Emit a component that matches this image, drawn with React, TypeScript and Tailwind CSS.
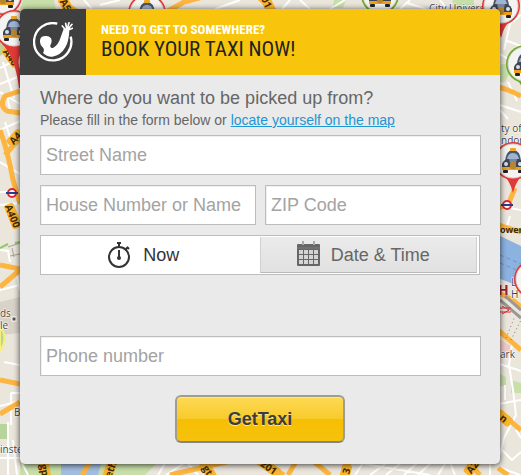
import React from "react";

type PinProps = { x: number; y: number; color: string; tip?: boolean };

function Pin({ x, y, color, tip = true }: PinProps) {
  return (
    <g transform={`translate(${x} ${y})`}>
      {tip && <path d="M-9 15 Q-3 20 0 32 Q3 20 9 15Z" fill={color} />}
      <circle r="19" fill={color} />
      <circle r="17" fill="#f4f3f1" stroke="#d9d6d2" strokeWidth="1" />
      <path d="M-8 0 Q-7 -11 0 -11 Q7 -11 8 0Z" fill="#4d5667" />
      <path d="M-6 -2 Q-5 -8 0 -8 Q5 -8 6 -2Z" fill="#9fb4d2" />
      <rect x="-3" y="-13" width="6" height="3" rx="1" fill="#f0a81c" />
      <path d="M-11 8 V3 Q-9 -2 -4 -2 H4 Q9 -2 11 3 V8Z" fill="#3f4553" />
      <path d="M-4 -2 H4 L3 2 H-3Z" fill="#7b879c" />
      <rect x="-11" y="6" width="22" height="3" fill="#eca01c" />
      <rect x="-10" y="9" width="5" height="3" rx="1" fill="#222" />
      <rect x="5" y="9" width="5" height="3" rx="1" fill="#222" />
      <rect x="-3" y="1" width="6" height="7" rx="2" fill="#b98630" />
      <circle cx="-7" cy="3" r="2" fill="#d7dfec" />
      <circle cx="7" cy="3" r="2" fill="#d7dfec" />
    </g>
  );
}

function Underground({ x, y }: { x: number; y: number }) {
  return (
    <g transform={`translate(${x} ${y})`}>
      <circle r="4" fill="#fff" stroke="#e0232e" strokeWidth="2" />
      <rect x="-6" y="-1" width="12" height="2" fill="#24408e" />
    </g>
  );
}

type RoadLabelProps = { x: number; y: number; angle: number; width: number; text: string };

function RoadLabel({ x, y, angle, width, text }: RoadLabelProps) {
  return (
    <g transform={`translate(${x} ${y}) rotate(${angle})`}>
      <rect x={-width / 2} y="-5" width={width} height="10" rx="3" fill="#fbb52f" />
      <text y="4" textAnchor="middle" fontSize="10" fontWeight="bold" fill="#3d2a08">
        {text}
      </text>
    </g>
  );
}

function CityMap() {
  const red = "#e23a38";
  const green = "#6aaa25";
  return (
    <svg
      className="absolute inset-0 h-full w-full font-['Open_Sans',sans-serif]"
      viewBox="0 0 521 475"
      preserveAspectRatio="xMinYMin slice"
      aria-hidden="true"
    >
      <rect width="521" height="475" fill="#ebe6dc" />
      <path d="M23 0H54L56 10H20Z M334 0h12l-3 8h-10z M452 0h22v5h-20z" fill="#c9dfaa" />
      <path d="M0 38 L8 50 L0 56Z M0 424h8v15H0z" fill="#b7d49a" />
      <path d="M0 302 L20 297 V333 L0 335Z" fill="#d9d2c9" />
      <path d="M0 326 Q9 338 0 351Z" fill="#b7d49a" stroke="#f6ef7c" strokeWidth="2" />
      <path d="M498 66 Q508 60 510 72 L505 82 H498Z M498 373 l8 4 v9 h-8z M511 380 l10 3 v10 h-10z" fill="#c9dfaa" />
      <path d="M498 235 L521 246 V287 L498 278Z" fill="#8cb2df" />
      <path d="M500 255 L521 264 M500 263 L521 272" stroke="#6e8fd0" strokeDasharray="4 3" />
      <path d="M498 338 L511 346 L508 356 H498Z" fill="#eecbc8" />
      <path d="M20 460H160L145 475H20Z" fill="#c9dfaa" />
      <path d="M61 460H102L98 475H61Z" fill="#a3bde0" />

      <g stroke="#fff" strokeWidth="2" fill="none">
        <path d="M0 68 L20 58 M0 84 L20 76 M3 62 L14 98 M0 92 L20 104 M7 95 L10 110 M0 130 L20 121 M5 122 L10 137 M0 162 L20 174 M0 192 H20 M0 205 L20 203 M0 250 L8 251 L10 262 M0 290 L20 285 M16 270 L20 290 M4 362 L20 365 M11 393 H20 M11 393 V425 M0 406 L20 401 M8 422 V475 M0 458 H20 M13 440 L17 475" />
        <path d="M84 0 L92 9 M100 5 L120 0 M215 9 L240 0 M290 0 L282 9 M300 0 L310 9 M345 0 L330 9 M407 3 L426 9 M410 0 L400 9 M440 0 L447 9" />
        <path d="M521 15 L510 24 L504 50 M505 40 L521 46 M498 53 L510 60 M500 105 L521 112 M508 82 L517 101 M500 110 L508 119 M498 206 L521 210 M510 216 L507 226" />
        <path d="M512 345 L509 365 L513 390 L516 415 L504 438 M500 364 L521 371 M498 404 L521 400 M505 385 V400 M516 430 L521 438 M500 448 L512 460 L521 452 M498 467 L520 475 M504 438 L500 455" />
        <path d="M22 463 L28 475 M158 475 L167 460 M166 475 L183 464 M185 460 L198 475 M355 475 L365 460 M370 475 L388 462 M386 475 L402 462 M404 475 L418 462 M418 475 L432 462 M365 464 L430 475 M438 475 L446 462 M455 475 L450 462 M490 475 V462" />
      </g>
      <g stroke="#fdb53f" strokeWidth="5" fill="none">
        <path d="M20 91 L5 96 Q-1 106 7 111 L20 113 M0 130 Q8 152 13 180 L20 204 M5 155 L20 138 M0 265 L20 269 M0 287 L20 270 M0 380 L20 384 M0 414 L20 402" />
        <path d="M59 0 L78 12 M166 12 L184 2 L203 -3 M258 -3 L276 12" />
        <path d="M498 87 Q510 90 521 96 M515 188 L508 205 L498 208 M498 225 L521 232 M498 293 Q510 297 521 307 M498 330 L521 350 M498 411 L521 430 M498 468 L508 475" />
        <path d="M82 475 L90 462 M170 475 L235 460 M260 462 L284 475 M288 475 L297 460 M312 460 L330 475 M342 475 L350 462 M466 460 L480 475" />
      </g>
      <path d="M8 247 L20 243 M10 256 L20 254 M12 248 L14 257" stroke="#a7a198" fill="none" />
      <path d="M0 248 L8 244 M15 243 L20 242" stroke="#8dca62" strokeWidth="2" />
      <path d="M500 300 L521 318 M505 296 L521 310" stroke="#9b9894" strokeWidth="3" />
      <path d="M506 338 L515 316 M511 340 L521 320" stroke="#777" strokeDasharray="1 3" />

      <RoadLabel x={11} y={57} angle={55} width={22} text="A40" />
      <RoadLabel x={66} y={5} angle={60} width={18} text="A5" />
      <RoadLabel x={267} y={2} angle={65} width={22} text="01" />
      <RoadLabel x={15} y={138} angle={-48} width={18} text="A4" />
      <RoadLabel x={13} y={216} angle={68} width={26} text="A400" />
      <RoadLabel x={45} y={470} angle={80} width={24} text="gp" />
      <RoadLabel x={110} y={469} angle={-70} width={24} text="eth" />
      <RoadLabel x={208} y={470} angle={58} width={20} text="gt" />
      <RoadLabel x={269} y={467} angle={35} width={26} text="201" />
      <RoadLabel x={346} y={471} angle={-75} width={14} text="3" />
      <RoadLabel x={472} y={467} angle={-52} width={18} text="A2" />
      <RoadLabel x={504} y={418} angle={40} width={18} text="n" />

      <g fontSize="10" fill="#444" stroke="#fff" strokeWidth="1" paintOrder="stroke">
        <text x="429" y="12">City Univers</text>
        <text x="0" y="317">ds</text>
        <text x="0" y="329">le</text>
        <text x="14" y="416">B</text>
        <text x="0" y="453">inste</text>
        <text x="501" y="132">ty of</text>
        <text x="501" y="144">ndor</text>
        <text x="511" y="286">L</text>
        <text x="511" y="298">H</text>
        <text x="500" y="358">ark</text>
      </g>
      <text x="500" y="233" fontSize="9" fontWeight="bold" fill="#3d2a08">
        ower
      </text>
      <text x="498" y="295" fontSize="14" fontWeight="bold" fill="#a51e36">
        H
      </text>
      <rect x="12" y="317" width="4" height="4" fill="#5b5146" stroke="#fff" />
      <Underground x={12} y={193} />
      <Underground x={507} y={205} />
      <path d="M500 308 H511 M500 312 H511 M502 306 L509 310 L502 314" stroke="#dc2c37" fill="none" />

      <path d="M2 44 Q15 56 19 88 H30 V44Z" fill={red} />
      <Pin x={36} y={62} color={red} tip={false} />
      <Pin x={3} y={-4} color={red} tip={false} />
      <Pin x={14} y={29} color={red} tip={false} />
      <Pin x={147} y={13} color={red} />
      <Pin x={380} y={-5} color={green} tip={false} />
      <Pin x={501} y={6} color={red} />
      <Pin x={525} y={64} color={green} />
      <Pin x={513} y={161} color={red} />
      <Pin x={533} y={279} color={red} />
    </svg>
  );
}

function Logo() {
  return (
    <svg className="h-10 w-10" viewBox="0 0 120 120" role="img" aria-label="GetTaxi">
      <path d="M73 5 A56 56 0 1 0 113 44" fill="none" stroke="#fff" strokeWidth="7" />
      <path
        d="M21 55 Q22 42 38 42 Q55 42 56 56 Q56 65 52 70 Q51 80 60 78 Q76 70 83 46 L93 18 L109 23 Q108 58 97 76 Q84 100 58 104 Q42 105 30 93 Q36 84 29 76 Q20 68 21 55Z"
        fill="#fff"
      />
      <path
        d="M98 24 L88 12 M101 20 L98 4 M103 20 L108 2 M105 22 L117 7 M105 24 L119 19"
        stroke="#fff"
        strokeWidth="5"
        strokeLinecap="round"
      />
    </svg>
  );
}

function Stopwatch() {
  return (
    <svg className="h-7 w-6" viewBox="0 0 24 28" fill="none" stroke="#333" aria-hidden="true">
      <circle cx="12" cy="16" r="10" strokeWidth="2" />
      <path d="M10 2 H14 M12 2 V6" strokeWidth="2" />
      <path d="M18 9 L21 6 M20 6 L22 8" strokeWidth="2" />
      <path d="M12 9 V18" strokeWidth="2" />
      <circle cx="12" cy="17" r="1" strokeWidth="2" />
    </svg>
  );
}

function Calendar() {
  return (
    <svg className="h-7 w-6" viewBox="0 0 24 28" aria-hidden="true">
      <rect x="0" y="3" width="23" height="22" rx="1" fill="#666" />
      <path d="M6 0 V4 M17 0 V4" stroke="#aaa" strokeWidth="2" />
      <path d="M0 7 H23" stroke="#7d7d7d" />
      <g fill="#d4d4d4">
        {[9, 14, 19].map((y) =>
          [2, 7, 12, 17].map((x) => <rect key={`${x}-${y}`} x={x} y={y} width="4" height="4" />)
        )}
      </g>
    </svg>
  );
}

function Field({ label, type = "text" }: { label: string; type?: string }) {
  return (
    <input
      type={type}
      aria-label={label}
      placeholder={label}
      className="block h-10 w-full min-w-0 border border-[#bdbdbd] bg-white px-[5px] text-lg text-[#333] shadow-[inset_1px_1px_0_#f0f0f0] outline-none placeholder:text-[#a3a3a3]"
    />
  );
}

export default function App() {
  const [when, setWhen] = React.useState<"now" | "later">("now");
  const active = "bg-white text-[#333]";
  const idle =
    "border-b border-l border-r border-b-[#b8b8b8] border-l-[#d0d0d0] border-r-[#cfcfcf] bg-linear-to-b from-[#ebebeb] to-[#e1e1e1] text-[#666]";

  return (
    <div className="relative min-h-screen overflow-hidden px-5 pt-[9px] pb-[11px] font-['Liberation_Sans',Arial,sans-serif]">
      <CityMap />
      <main className="relative max-w-[480px] rounded-[5px] bg-[#eaeaea] shadow-[0_1px_6px_rgba(0,0,0,0.75)]">
        <header className="flex h-[66px] overflow-hidden rounded-t-[5px] bg-[#f8c50c]">
          <div className="flex w-[66px] shrink-0 items-center justify-center bg-[#3f3f3f]">
            <Logo />
          </div>
          <div className="pt-[14px] pl-[15px] font-['Arial_Narrow','Roboto_Condensed',Roboto,sans-serif]">
            <p className="text-[13px] leading-[14px] font-bold text-white">NEED TO GET TO SOMEWHERE?</p>
            <h1 className="text-[21px] leading-6 text-[#222]">BOOK YOUR TAXI NOW!</h1>
          </div>
        </header>

        <form className="pt-3 pr-[19px] pb-[21px] pl-5" onSubmit={(e) => e.preventDefault()}>
          <h2 className="text-lg leading-[22px] text-[#666]">Where do you want to be picked up from?</h2>
          <p className="text-sm leading-[22px] text-[#666]">
            Please fill in the form below or{" "}
            <a href="#map" className="text-[#2196d3] underline">
              locate yourself on the map
            </a>
          </p>

          <div className="mt-1 grid grid-cols-2 gap-x-[9px] gap-y-[10px]">
            <div className="col-span-2">
              <Field label="Street Name" />
            </div>
            <Field label="House Number or Name" />
            <Field label="ZIP Code" />
          </div>

          <div className="mt-[10px] mr-px grid h-10 grid-cols-2 border border-[#bdbdbd] bg-white p-px pr-[2px] text-lg">
            <button
              type="button"
              aria-pressed={when === "now"}
              onClick={() => setWhen("now")}
              className={`flex items-center justify-center gap-3 pr-[15px] ${when === "now" ? active : idle}`}
            >
              <Stopwatch />
              Now
            </button>
            <button
              type="button"
              aria-pressed={when === "later"}
              onClick={() => setWhen("later")}
              className={`flex items-center justify-center gap-[10px] pr-[10px] ${when === "later" ? active : idle}`}
            >
              <Calendar />
              Date &amp; Time
            </button>
          </div>

          <div className="mt-[61px]">
            <Field label="Phone number" type="tel" />
          </div>

          <div className="mt-[19px] mr-px flex justify-center">
            <button
              type="submit"
              className="h-12 w-[170px] rounded-[6px] border-2 border-[#a09c90] border-b-[#858585] bg-[linear-gradient(#fdd954,#f8cb2b_50%,#f6bf03_50%,#f7c20c)] text-lg font-bold text-[#3c3c3c] shadow-[inset_0_1px_0_#ffe78e] [text-shadow:0_1px_0_#fde695]"
            >
              GetTaxi
            </button>
          </div>
        </form>
      </main>
    </div>
  );
}
